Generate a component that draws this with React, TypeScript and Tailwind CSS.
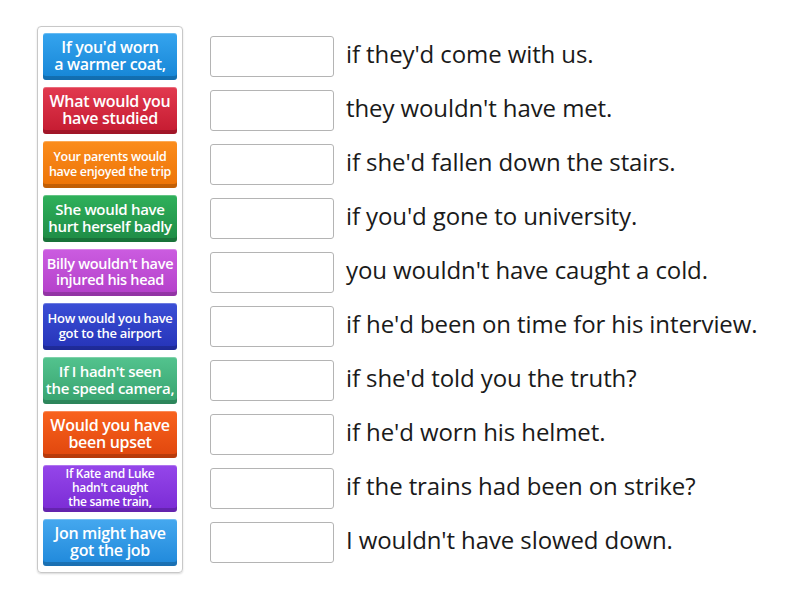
const tiles = [
  { lines: ["If you'd worn", 'a warmer coat,'], bg: 'bg-[linear-gradient(#35a4ee,#1585d6)]', size: 'text-[16px] leading-[17px]' },
  { lines: ['What would you', 'have studied'], bg: 'bg-[linear-gradient(#e23a4f,#c41a30)]', size: 'text-[16px] leading-[17px]' },
  { lines: ['Your parents would', 'have enjoyed the trip'], bg: 'bg-[linear-gradient(#fb8c1c,#ec7306)]', size: 'text-[12.5px] leading-[15px]' },
  { lines: ['She would have', 'hurt herself badly'], bg: 'bg-[linear-gradient(#2fb15b,#1e8a45)]', size: 'text-[15px] leading-[17px]' },
  { lines: ["Billy wouldn't have", 'injured his head'], bg: 'bg-[linear-gradient(#cb5ce0,#b33fc9)]', size: 'text-[14.5px] leading-[16px]' },
  { lines: ['How would you have', 'got to the airport'], bg: 'bg-[linear-gradient(#3b4fd6,#2533b8)]', size: 'text-[13px] leading-[15px]' },
  { lines: ["If I hadn't seen", 'the speed camera,'], bg: 'bg-[linear-gradient(#53c38e,#36a26e)]', size: 'text-[15px] leading-[17px]' },
  { lines: ['Would you have', 'been upset'], bg: 'bg-[linear-gradient(#f8621d,#e0460d)]', size: 'text-[16px] leading-[17px]' },
  { lines: ['If Kate and Luke', "hadn't caught", 'the same train,'], bg: 'bg-[linear-gradient(#9546ea,#7a2bd4)]', size: 'text-[12px] leading-[14px]' },
  { lines: ['Jon might have', 'got the job'], bg: 'bg-[linear-gradient(#45a8ef,#1f88da)]', size: 'text-[16px] leading-[17px]' },
]

const endings = [
  "if they'd come with us.",
  "they wouldn't have met.",
  "if she'd fallen down the stairs.",
  "if you'd gone to university.",
  "you wouldn't have caught a cold.",
  "if he'd been on time for his interview.",
  "if she'd told you the truth?",
  "if he'd worn his helmet.",
  'if the trains had been on strike?',
  "I wouldn't have slowed down.",
]

export default function App() {
  return (
    <div className="w-[800px] h-[600px] bg-white flex" style={{ fontFamily: '"Open Sans", Lato, sans-serif' }}>
      {/* Tile column */}
      <div className="ml-[37px] mt-[26px] w-[146px] h-[547px] rounded border border-[#c8c8c8] shadow-[0_1px_2px_rgba(0,0,0,0.15)] px-[5px] pt-[6px] flex flex-col gap-[7px]">
        {tiles.map((t, i) => (
          <div
            key={i}
            className={`h-[47px] rounded-[3px] ${t.bg} shadow-[inset_0_-4px_0_rgba(0,0,0,0.18),inset_0_1px_0_rgba(255,255,255,0.25)] flex flex-col items-center justify-center text-center text-white font-semibold tracking-[-0.3px] px-[2px] pb-[1px] whitespace-nowrap ${t.size}`}
          >
            {t.lines.map((l, j) => (
              <span key={j}>{l}</span>
            ))}
          </div>
        ))}
      </div>

      {/* Answer rows */}
      <div className="ml-[27px] mt-[36px] flex flex-col gap-[13px]">
        {endings.map((e, i) => (
          <div key={i} className="flex items-center h-[41px]">
            <div className="w-[124px] h-[41px] rounded-[3px] border border-[#b4b4b4] bg-white" />
            <span className="ml-[12px] text-[24px] leading-[30px] text-[#1a1a1a] whitespace-nowrap -mt-[6px] tracking-[-0.1px]">
              {e}
            </span>
          </div>
        ))}
      </div>
    </div>
  )
}
